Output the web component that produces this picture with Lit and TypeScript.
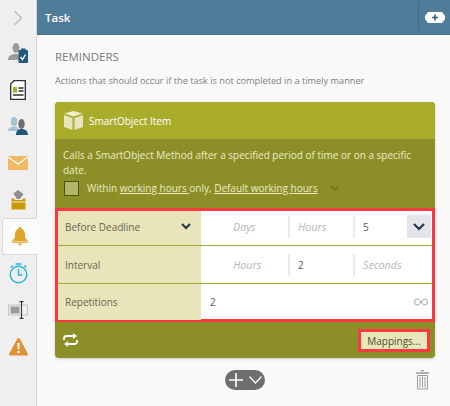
import { LitElement, html, css } from "lit";
import { customElement } from "lit/decorators.js";

@customElement("app-root")
export class AppRoot extends LitElement {
  static styles = css`
    :host { display: flex; width: 450px; height: 406px; overflow: hidden; font-family: "Open Sans", sans-serif; background: #f9f9f9; color: #6d6d6d; }
    .side { width: 36px; flex: none; background: #efefef; border-right: 1px solid #d4d4d4; display: flex; flex-direction: column; position: relative; }
    .item { height: 36.7px; flex: none; display: flex; align-items: center; justify-content: center; box-sizing: border-box; }
    .chev { height: 35px; }
    .active { margin-left: 2px; margin-right: -1px; background: #fbfbfb; border: 1px solid #d9d9d9; border-right: none; border-radius: 3px 0 0 3px; }
    .main { flex: 1; display: flex; flex-direction: column; min-width: 0; }
    .top { height: 35px; flex: none; background: #4f7d99; box-sizing: border-box; border-bottom: 1px solid #44708b; display: flex; align-items: center; justify-content: space-between; padding-left: 8px; color: #fff; font-size: 11.5px; font-weight: 600; }
    .top-plus { width: 32px; height: 28px; box-sizing: border-box; border-left: 1px solid #3e6b87; display: flex; align-items: center; justify-content: center; }
    .content { flex: 1; padding: 14px 15px 0 18px; display: flex; flex-direction: column; }
    h2 { margin: 0; font-size: 11.5px; line-height: 16px; font-weight: 400; color: #7a7a7a; }
    .desc { margin: 9px 0 0; font-size: 9.2px; line-height: 14px; color: #7f7f7f; white-space: nowrap; }
    .card { margin-top: 14px; height: 256px; width: 380px; border-radius: 4px; background: #8c8f27; display: flex; flex-direction: column; box-shadow: 0 1px 3px rgba(0,0,0,.18); }
    .card-head { height: 37px; flex: none; background: #aaad2c; border-radius: 4px 4px 0 0; display: flex; align-items: center; gap: 6px; padding-left: 9px; color: #fff; font-size: 10px; font-weight: 400; }
    .card-body { height: 69px; flex: none; box-sizing: border-box; padding: 9px 9px 0 8px; color: #ecebc8; font-size: 10px; line-height: 15px; }
    .check { display: flex; align-items: center; margin-top: 2px; height: 16px; white-space: nowrap; }
    .box { width: 15px; height: 15px; box-sizing: border-box; border: 1.5px solid #4f5113; background: #b3b56a; margin: 0 8px 0 1px; flex: none; }
    .check u { text-underline-offset: 1px; }
    .check svg { margin-left: 12px; }
    .table { height: 114px; flex: none; border: 3px solid #f93a40; box-sizing: border-box; background: #fff; display: flex; flex-direction: column; }
    .row { flex: none; height: 34px; display: flex; border-bottom: 1px solid #a6a834; box-sizing: content-box; font-size: 10px; }
    .row.mid { height: 37px; }
    .row.last { height: 36px; border-bottom: none; }
    .label { width: 143px; flex: none; background: #e8e5bb; box-sizing: border-box; padding: 0 10px 0 7px; display: flex; align-items: center; justify-content: space-between; color: #66664f; }
    .first .label, .first .vals { padding-bottom: 3px; }
    .vals { flex: 1; display: flex; align-items: center; }
    .cell { height: 22px; display: flex; align-items: center; box-sizing: border-box; padding-left: 8px; color: #55595c; }
    .c1 { width: 89px; border-right: 2px solid #ebebeb; padding-left: 32px; }
    .c2 { width: 65px; border-right: 2px solid #ebebeb; }
    .c3 { flex: 1; justify-content: space-between; padding-right: 1px; }
    .ph { font-style: italic; color: #b6b6b6; font-size: 10.7px; }
    .drop { width: 24px; height: 23px; background: #e3e5e8; display: flex; align-items: center; justify-content: center; }
    .rep { flex: 1; display: flex; align-items: center; justify-content: space-between; padding: 0 4px 0 9px; color: #55595c; }
    .foot { flex: 1; display: flex; align-items: center; justify-content: space-between; padding: 0 5px 0 8px; }
    .map { width: 72px; height: 23px; box-sizing: border-box; border: 3px solid #f93a40; background: #e9e7b9; color: #4b4b33; font-size: 10px; display: flex; align-items: center; justify-content: center; margin-top: 1px; }
    .bottom { margin-top: 12px; display: flex; justify-content: space-between; align-items: center; padding: 0 6px 0 170px; }
    .pill { width: 40px; height: 20px; border-radius: 10px; background: #6e6e6e; display: flex; align-items: center; justify-content: center; gap: 6px; }
  `;

  render() {
    return html`
      <nav class="side">
        <div class="item chev"><svg width="10" height="16" viewBox="0 0 10 16" fill="none" stroke="#b5b5b5" stroke-width="1.1"><path d="M1.500 1l7 7-7 7"/></svg></div>
        <div class="item"><svg width="20" height="20" viewBox="0 0 20 20"><ellipse cx="8" cy="5" rx="3.500" ry="5" fill="#9a9a9a"/><path d="M0 17c0-4 3-6 8-6 2 0 3 .5 3 1v5z" fill="#9a9a9a"/><rect x="10.500" y="7" width="9.500" height="13" rx="1" fill="#1f587c"/><rect x="13" y="5.500" width="4.500" height="3" fill="#1f587c"/><path d="M12.500 14l2 2.500 3-5" fill="none" stroke="#fff" stroke-width="1.300"/></svg></div>
        <div class="item"><svg width="16" height="20" viewBox="0 0 16 20"><path d="M4 .7h11.300v18.600H.7V4z" fill="#fff" stroke="#303030" stroke-width="1.300"/><rect x="3" y="7" width="4" height="5.500" fill="#aaad2c"/><path d="M8.500 8h5M8.500 11h5" stroke="#303030" stroke-width="1.500"/><path d="M3 15h10.500" stroke="#303030" stroke-width="1.500"/></svg></div>
        <div class="item"><svg width="20" height="19" viewBox="0 0 20 19"><ellipse cx="6" cy="4.500" rx="3.300" ry="4.500" fill="#a9c1d1"/><path d="M0 14c0-3 3-4.500 6-4.500S11 11 11 14z" fill="#a9c1d1"/><ellipse cx="13.500" cy="7" rx="3.200" ry="5" fill="#6e6e6e"/><path d="M8 18c0-4 2-6 5.500-6s6.500 2 6.500 6z" fill="#1f587c"/></svg></div>
        <div class="item"><svg width="20" height="14" viewBox="0 0 20 14"><rect width="20" height="14" fill="#efb968"/><path d="M0 1l10 7 10-7" fill="none" stroke="#fff" stroke-width="1.300"/></svg></div>
        <div class="item"><svg width="15" height="20" viewBox="0 0 15 20"><path d="M.5 8.500h3v1.500h8V8.500h3V19.500H.5z" fill="#c99a08"/><path d="M.5 12h14" stroke="#fff" stroke-width=".8"/><path d="M2.500 3.500L7 0l5.500 4-3.500 5H6z" fill="#8d8d8d"/></svg></div>
        <div class="item active"><svg width="16" height="19" viewBox="0 0 16 19"><path d="M8 0c1 0 1.500.7 1.500 1.500C12 2.500 13 5 13 8c0 3 1 4.500 3 6H0c2-1.500 3-3 3-6 0-3 1-5.500 3.500-6.500C6.500.7 7 0 8 0z" fill="#dea52d"/><rect x="0" y="14.500" width="16" height="1.300" fill="#dea52d"/><path d="M5.500 16.500h5L8 18.800z" fill="#dea52d"/></svg></div>
        <div class="item"><svg width="19" height="21" viewBox="0 0 19 21" fill="none" stroke="#1fb8d3" stroke-width="1.400"><circle cx="9.500" cy="11.500" r="8.300"/><path d="M9.500 6v6h4M6.500 1h6M1.800 4.500l2-2M17.200 4.500l-2-2"/></svg></div>
        <div class="item"><svg width="20" height="18" viewBox="0 0 20 18"><rect x=".5" y="4" width="19" height="10" fill="none" stroke="#c2c2c2"/><rect x="2.500" y="5.500" width="9" height="7" fill="#9a9a9a"/><path d="M11.500 .6h4M13.500 .6v16.800M11.500 17.400h4" stroke="#333" stroke-width="1.100" fill="none"/></svg></div>
        <div class="item"><svg width="19" height="18" viewBox="0 0 19 18"><path d="M9.500 0c.5 0 1 .3 1.300.8l8 15c.4.800 0 1.700-1 1.700H1.200c-1 0-1.400-.9-1-1.700l8-15c.3-.5.800-.8 1.300-.8z" fill="#de9135"/><path d="M8.300 5h2.400l-.5 6.500H8.800z" fill="#fff"/><circle cx="9.500" cy="14" r="1.300" fill="#fff"/></svg></div>
      </nav>
      <div class="main">
        <header class="top"><span>Task</span>
          <div class="top-plus"><svg width="20" height="11" viewBox="0 0 20 11"><path d="M3 0h14l3 4v3l-3 4H3L0 7V4z" fill="#fff"/><path d="M10 2.500v6M7 5.500h6" stroke="#2f6385" stroke-width="1.700"/></svg></div>
        </header>
        <div class="content">
          <h2>REMINDERS</h2>
          <p class="desc">Actions that should occur if the task is not completed in a timely manner</p>
          <section class="card">
            <div class="card-head">
              <svg width="19" height="19" viewBox="0 0 19 19"><path d="M9.500 0l9 2.500-9 3-9-3z" fill="#efeecf"/><path d="M0 4l8.500 3v12L0 16z" fill="#e6e5c0"/><path d="M19 4l-8.500 3v12l8.500-3z" fill="#e6e5c0"/></svg>
              <span>SmartObject Item</span>
            </div>
            <div class="card-body">
              Calls a SmartObject Method after a specified period of time or on a specific date.
              <div class="check"><span class="box"></span><span>Within <u>working hours </u>only, <u>Default working hours</u></span>
                <svg width="10" height="6" viewBox="0 0 10 6" fill="none" stroke="#6f7122" stroke-width="1.300"><path d="M1 1l4 4 4-4"/></svg></div>
            </div>
            <div class="table">
              <div class="row first">
                <div class="label"><span>Before Deadline</span><svg width="10" height="7" viewBox="0 0 10 7" fill="none" stroke="#25364a" stroke-width="2"><path d="M1 1l4 4 4-4"/></svg></div>
                <div class="vals"><div class="cell c1 ph">Days</div><div class="cell c2 ph">Hours</div>
                  <div class="cell c3"><span>5</span><span class="drop"><svg width="12" height="8" viewBox="0 0 12 8" fill="none" stroke="#25364a" stroke-width="2.200"><path d="M1 1l5 5 5-5"/></svg></span></div></div>
              </div>
              <div class="row mid">
                <div class="label"><span>Interval</span></div>
                <div class="vals"><div class="cell c1 ph">Hours</div><div class="cell c2">2</div><div class="cell c3 ph">Seconds</div></div>
              </div>
              <div class="row last">
                <div class="label"><span>Repetitions</span></div>
                <div class="rep"><span>2</span><svg width="14" height="8" viewBox="0 0 14 8" fill="none" stroke="#a0a0a0" stroke-width="1"><path d="M7 4C5.500 1.500 4.500 1 3.500 1a3 3 0 000 6c1 0 2-.5 3.500-3s2.500-3 3.500-3a3 3 0 010 6c-1 0-2-.5-3.500-3z"/></svg></div>
              </div>
            </div>
            <div class="foot">
              <svg width="15" height="14" viewBox="0 0 15 14" fill="none" stroke="#fff" stroke-width="1.800"><path d="M1 7V5.500C1 4 2 3 3.500 3H11"/><path d="M10 0l4 3-4 3z" fill="#fff" stroke="none"/><path d="M14 7v1.500c0 1.500-1 2.500-2.500 2.500H4"/><path d="M5 8l-4 3 4 3z" fill="#fff" stroke="none"/></svg>
              <div class="map">Mappings...</div>
            </div>
          </section>
          <div class="bottom">
            <div class="pill"><svg width="14" height="14" viewBox="0 0 14 14" stroke="#fff" stroke-width="1.600"><path d="M7 0v14M0 7h14"/></svg><svg width="13" height="8" viewBox="0 0 13 8" fill="none" stroke="#fff" stroke-width="1.200"><path d="M.5.500L6.500 7l6-6.500"/></svg></div>
            <svg width="13" height="20" viewBox="0 0 13 20" fill="none" stroke="#9b9b9b"><path d="M5 .5h3M0 3h13" stroke-width="1.500"/><path d="M1.500 5.500h10V19h-10zM4 7v10.500M6.500 7v10.500M9 7v10.500" stroke-width="1"/></svg>
          </div>
        </div>
      </div>
    `;
  }
}
